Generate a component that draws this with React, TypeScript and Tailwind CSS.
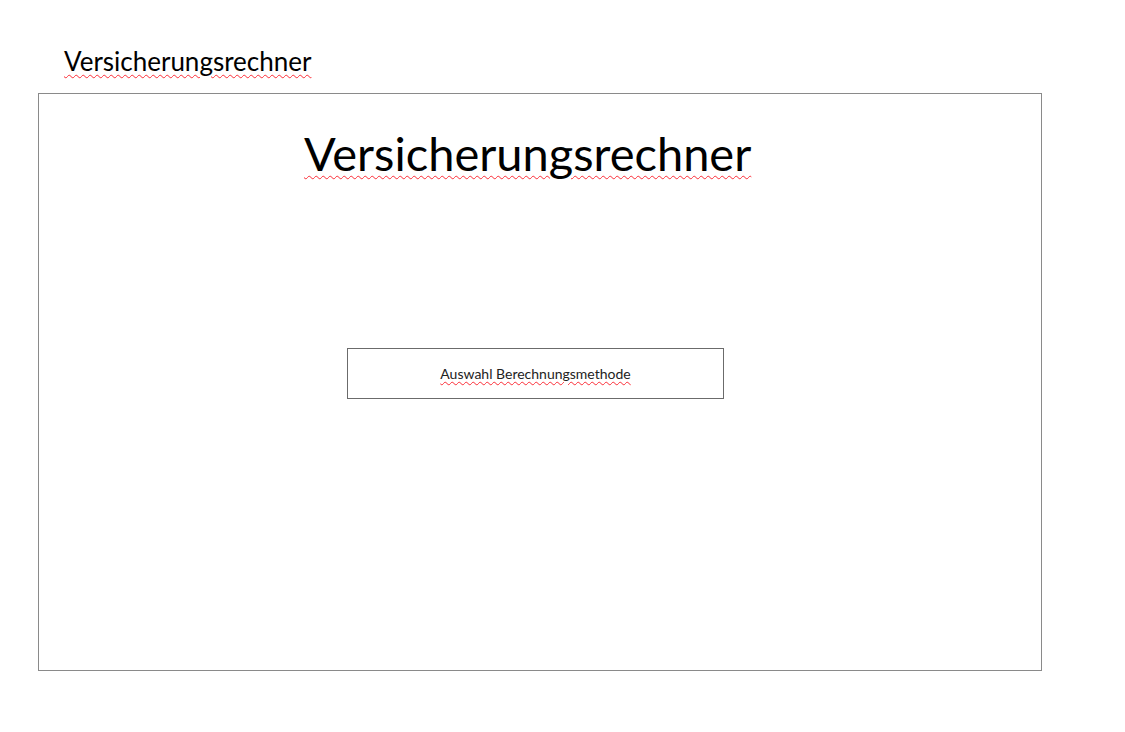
export default function App() {
  return (
    <div className="w-[1125px] h-[732px] bg-white font-['Lato',sans-serif] text-black">
      <div className="pt-[44px] pl-[64px]">
        <h1 className="text-[26px] leading-[34px] underline decoration-wavy decoration-red-500 decoration-1 underline-offset-[3px]">
          Versicherungsrechner
        </h1>
      </div>
      <div className="ml-[38px] mt-[15px] w-[1004px] h-[578px] border border-[#8a8a8a]">
        <h2 className="mt-[29px] ml-[265px] text-[47px] leading-[60px] underline decoration-wavy decoration-red-500 decoration-1 underline-offset-[4px]">
          Versicherungsrechner
        </h2>
        <button className="block mt-[165px] ml-[308px] w-[377px] h-[51px] border border-[#6b6b6b] flex items-center justify-center text-[14px] text-[#222]">
          <span className="underline decoration-wavy decoration-red-500 decoration-1 underline-offset-[2px]">
            Auswahl Berechnungsmethode
          </span>
        </button>
      </div>
    </div>
  );
}
